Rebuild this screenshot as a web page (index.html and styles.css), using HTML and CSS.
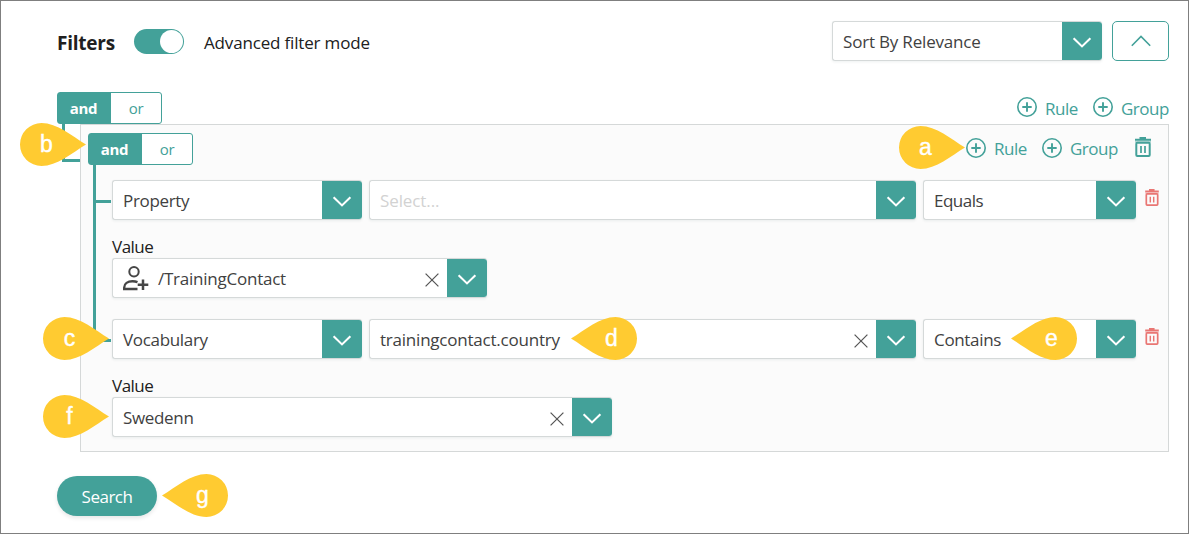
FILE: index.html
```html
<!DOCTYPE html>
<html lang="en">
<head>
<meta charset="utf-8">
<title>Filters</title>
<link rel="stylesheet" href="styles.css">
</head>
<body>
<svg class="defs" width="0" height="0" aria-hidden="true">
  <symbol id="down" viewBox="0 0 20 12"><path d="M1.6 1.2 10 9.4l8.400-8.200" fill="none" stroke="currentColor" stroke-width="2.100"/></symbol>
  <symbol id="up" viewBox="0 0 20 12"><path d="M.8 10.700 10 1.500l9.200 9.200" fill="none" stroke="currentColor" stroke-width="1.600"/></symbol>
  <symbol id="clear" viewBox="0 0 14 14"><path d="M.6.6l12.800 12.800M13.400.6.6 13.400" fill="none" stroke="currentColor" stroke-width="1.250"/></symbol>
  <symbol id="plus" viewBox="0 0 20 20"><circle cx="10" cy="10" r="9.200" fill="none" stroke="currentColor" stroke-width="1.600"/><path d="M10 5.300v9.400M5.300 10h9.400" stroke="currentColor" stroke-width="1.900"/></symbol>
  <symbol id="trash" viewBox="0 0 16 20"><path d="M0 1.700h4.500V0h6.500v1.700H16v2H0z" fill="currentColor"/><path d="M0 3.700h16v2H0z" fill="currentColor" opacity=".4"/><rect x="1.300" y="5.800" width="13.400" height="13.200" rx="1" fill="none" stroke="currentColor" stroke-width="2"/><path d="M6 9v7M10 9v7" stroke="currentColor" stroke-width="1.700"/></symbol>
  <symbol id="person" viewBox="0 0 26 25"><circle cx="11" cy="5.700" r="4.700" fill="none" stroke="currentColor" stroke-width="2"/><path d="M14.500 23H1.200v-1.500c0-4 3.600-6.200 8.300-6.200 2 0 3.600.3 5 .9" fill="none" stroke="currentColor" stroke-width="2.400"/><path d="M20 13.500v10.500M14.700 18.700h10.600" stroke="currentColor" stroke-width="2.500"/></symbol>
  <symbol id="drop" viewBox="0 0 66 43"><path d="M66 21.500C52 13 37 0 21.500 0a21.500 21.500 0 0 0 0 43C37 43 52 30 66 21.500z" fill="#ffcb31"/></symbol>
</svg>
<main class="page">
  <header class="header">
    <h1 class="title">Filters</h1>
    <span class="switch"><span class="knob"></span></span>
    <span class="mode">Advanced filter mode</span>
    <div class="select sort"><span class="text t-sort">Sort By Relevance</span><span class="arrow"><svg><use href="#down"/></svg></span></div>
    <button class="collapse"><svg><use href="#up"/></svg></button>
  </header>

  <section class="root">
    <div class="bar">
      <div class="logic"><b>and</b><span>or</span></div>
      <div class="actions">
        <svg class="plus"><use href="#plus"/></svg><span class="rule">Rule</span>
        <svg class="plus"><use href="#plus"/></svg><span class="grp">Group</span>
      </div>
    </div>
    <div class="stem outer"></div>
    <div class="group">
      <div class="bar inner">
        <div class="logic"><b>and</b><span>or</span></div>
        <div class="actions">
          <svg class="plus"><use href="#plus"/></svg><span class="rule">Rule</span>
          <svg class="plus"><use href="#plus"/></svg><span class="grp">Group</span>
          <svg class="trash"><use href="#trash"/></svg>
        </div>
      </div>
      <div class="stem first"></div>
      <div class="stem second"></div>
      <div class="row">
        <div class="select kind"><span class="text t-prop">Property</span><span class="arrow"><svg><use href="#down"/></svg></span></div>
        <div class="select field"><span class="text t-ph">Select...</span><span class="arrow"><svg><use href="#down"/></svg></span></div>
        <div class="select op"><span class="text t-eq">Equals</span><span class="arrow"><svg><use href="#down"/></svg></span></div>
        <svg class="trash red"><use href="#trash"/></svg>
      </div>
      <label class="label">Value</label>
      <div class="select contact"><svg class="person"><use href="#person"/></svg><span class="text t-path">/TrainingContact</span><svg class="clear"><use href="#clear"/></svg><span class="arrow"><svg><use href="#down"/></svg></span></div>
      <div class="row next">
        <div class="select kind"><span class="text t-voc">Vocabulary</span><span class="arrow"><svg><use href="#down"/></svg></span></div>
        <div class="select field"><span class="text t-key">trainingcontact.country</span><svg class="clear"><use href="#clear"/></svg><span class="arrow"><svg><use href="#down"/></svg></span></div>
        <div class="select op"><span class="text t-con">Contains</span><span class="arrow"><svg><use href="#down"/></svg></span></div>
        <svg class="trash red"><use href="#trash"/></svg>
      </div>
      <label class="label">Value</label>
      <div class="select country"><span class="text t-swe">Swedenn</span><svg class="clear"><use href="#clear"/></svg><span class="arrow"><svg><use href="#down"/></svg></span></div>
    </div>
  </section>
  <button class="search">Search</button>

  <div class="pin pin-a"><svg><use href="#drop"/></svg><span>a</span></div>
  <div class="pin pin-b"><svg><use href="#drop"/></svg><span>b</span></div>
  <div class="pin pin-c"><svg><use href="#drop"/></svg><span>c</span></div>
  <div class="pin flip pin-d"><svg><use href="#drop"/></svg><span>d</span></div>
  <div class="pin flip pin-e"><svg><use href="#drop"/></svg><span>e</span></div>
  <div class="pin pin-f"><svg><use href="#drop"/></svg><span>f</span></div>
  <div class="pin flip pin-g"><svg><use href="#drop"/></svg><span>g</span></div>
</main>
</body>
</html>
```
FILE: styles.css
```css
* { box-sizing: border-box; }
body { margin: 0; font: 17px/24px "Open Sans", "Noto Sans", sans-serif; letter-spacing: -.5px; color: #202020; }
svg { display: block; flex: none; overflow: visible; }
.defs { position: absolute; }
.page { position: relative; width: 1189px; height: 534px; padding: 20px 19px 0 56px; border: 1px solid #7f7f7f; background: #fff; }
button { font: inherit; letter-spacing: inherit; padding: 0; cursor: pointer; }
.header { display: flex; height: 40px; align-items: center; }
.title { margin: 3px 0 0; width: 77px; font-size: 19px; line-height: 24px; font-weight: 700; letter-spacing: -.25px; white-space: nowrap; }
.switch { display: flex; justify-content: flex-end; width: 50px; height: 25px; padding: 1px; border-radius: 13px; background: #43a199; }
.knob { width: 23px; height: 23px; border-radius: 50%; background: #fff; }
.mode { margin: 3px 0 0 20px; letter-spacing: -.17px; white-space: nowrap; }

.select { display: flex; flex: none; align-items: center; height: 40px; padding-left: 10px; border: 1px solid #d5d9d9; border-right: 0; border-radius: 3px; background: #fff; box-shadow: 0 1px 3px rgba(0, 60, 50, .07); color: #414141; }
.text { flex: 1; padding-top: 1px; white-space: nowrap; }
.arrow { display: flex; align-items: center; justify-content: center; width: 40px; height: 38px; border-radius: 0 3px 3px 0; background: #43a199; color: #fff; }
.arrow svg { width: 20px; height: 12px; margin-top: 3px; }
.clear { width: 14px; height: 14px; margin: 4px 8px 0 0; color: #555; }
.sort { width: 270px; margin-left: auto; }
.collapse { display: flex; align-items: center; justify-content: center; width: 57px; height: 40px; margin-left: 10px; border: 1px solid #43a199; border-radius: 5px; background: #fff; color: #43a199; }
.collapse svg { width: 20px; height: 12px; }

.root { position: relative; margin-top: 31px; }
.bar { display: flex; height: 32px; justify-content: space-between; }
.logic { display: flex; width: 105px; height: 32px; border: 1px solid #43a199; border-radius: 3px; background: #fff; font-size: 15px; line-height: 31px; letter-spacing: -.35px; text-align: center; color: #43a199; }
.logic b { width: 53px; padding-right: 2px; background: #43a199; color: #fff; }
.logic span { flex: 1; }
.actions { display: flex; color: #43a199; }
.plus { width: 20px; height: 20px; margin: 5px 8px 0 0; }
.actions span { padding-top: 5px; }
.rule { width: 33px; margin-right: 15px; }
.grp { width: 48px; }
.stem { position: absolute; border: solid #43a199; border-width: 0 0 3px 3px; }
.outer { left: 5px; top: 32px; width: 18px; height: 38px; }
.first { left: 12px; top: 40px; width: 18px; height: 38px; }
.second { left: 12px; top: 40px; width: 18px; height: 177px; }
.group { position: relative; height: 328px; margin-left: 23px; padding: 8px 16px 0 31px; border: 1px solid #d5d8d8; background: #fbfbfb; }
.inner { margin-left: -24px; }
.inner .actions span { padding-top: 4px; }
.inner .trash { width: 16px; height: 20px; margin: 4px 1px 0 17px; }
.row { display: flex; gap: 7px; margin-top: 15px; }
.kind { width: 250px; }
.field { width: 547px; }
.op { width: 213px; }
.trash.red { width: 14px; height: 17px; margin: 9px 0 0 2px; color: #e97673; }
.label { display: block; height: 24px; margin-top: 15px; line-height: 24px; }
.group .label + .select { margin-top: -1px; }
.contact { width: 375px; }
.person { width: 26px; height: 25px; margin-right: 9px; color: #464646; }
.next { margin-top: 21px; }
.country { width: 500px; }
.t-sort { letter-spacing: -.19px; }
.t-prop, .t-voc, .t-con, .t-swe { letter-spacing: -.33px; }
.t-path { letter-spacing: -.24px; }
.t-key { letter-spacing: -.22px; }
.t-ph { color: #d2d2d2; letter-spacing: -.1px; }
.search { display: block; width: 100px; height: 40px; margin-top: 24px; padding-top: 2px; border: 0; border-radius: 20px; background: #43a199; color: #fff; box-shadow: 0 2px 4px rgba(0, 0, 0, .1); }

.pin { position: absolute; width: 66px; height: 43px; color: #fff; font: 23px/43px "Liberation Sans", Arial, sans-serif; letter-spacing: 0; -webkit-text-stroke: .4px #fff; }
.pin svg { width: 66px; height: 43px; }
.pin span { position: absolute; left: 5px; top: 0; width: 43px; text-align: center; }
.flip svg { transform: scaleX(-1); }
.flip span { left: 19px; }
.pin-a { left: 898px; top: 125px; }
.pin-b { left: 19px; top: 122px; }
.pin-c { left: 42px; top: 316px; }
.pin-d { left: 570px; top: 316px; }
.pin-e { left: 1010px; top: 316px; }
.pin-f { left: 42px; top: 394px; }
.pin-g { left: 161px; top: 473px; }
```
